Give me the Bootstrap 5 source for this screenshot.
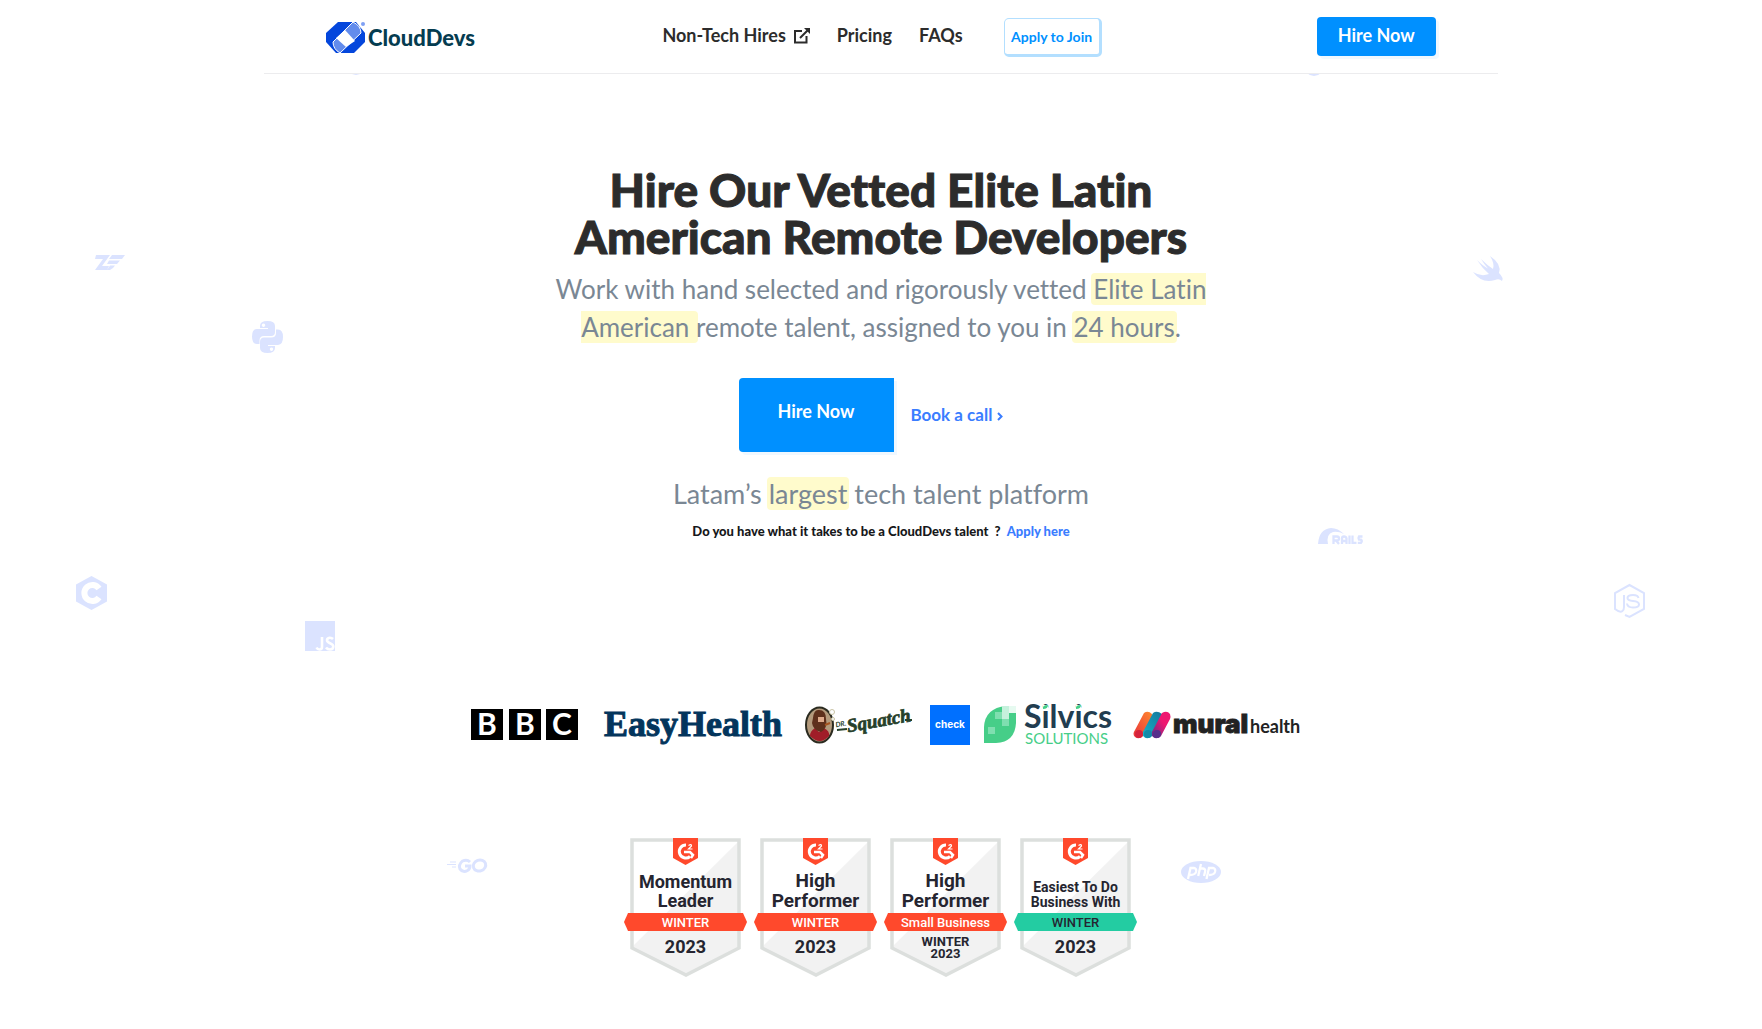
<!DOCTYPE html>
<html lang="en">
<head>
<meta charset="utf-8">
<meta name="viewport" content="width=device-width, initial-scale=1">
<title>CloudDevs</title>
<link href="https://cdn.jsdelivr.net/npm/bootstrap@5.3.0/dist/css/bootstrap.min.css" rel="stylesheet">
<style>
body{font-family:Lato,"Open Sans",sans-serif;color:#2c2c2c;background:#fff;font-variant-ligatures:none}
a{text-decoration:none}
.site-head{width:70%;padding:0 62px;height:74px;border-bottom:1px solid #ececee;background:#fff}
.brand-mark{width:152px;height:34px;margin-top:2px}
.site-nav{gap:27px;font-size:18px;font-weight:700;padding-right:31px}
.site-nav a{color:#2c2c2c;padding-bottom:2px}
.site-nav .join-btn{margin:2px 0 0 14px;width:98px;height:39px;border:1px solid #b3dfff;border-right-width:3px;border-bottom-width:3px;border-radius:5px;font-size:14px;color:#0090ff;background:#fff}
.hire-btn{background:#0090ff;color:#fff;font-weight:700;font-size:18px;border:0;border-radius:4px;box-shadow:3px 3px 0 #f0f8ff}
.hire-sm{width:119px;height:39px;padding-bottom:4px}
.hire-lg{width:155px;height:74px;border-radius:4px 0 0 4px;padding-bottom:9px}
.hero{padding-top:92px}
.hero h1{font-size:46px;line-height:47px;font-weight:900;-webkit-text-stroke:1px #2c2c2c;max-width:700px;margin:0 auto 10px}
.pitch{font-size:26px;line-height:38px;color:#7a8794;max-width:700px;margin:0 auto}
.pitch-lg{font-size:27px;margin-top:23px}
.hl{background:#fffbcc;border-radius:4px;padding:0 2px;margin:0 -2px}
.cta{gap:17px;margin-top:32px;padding-right:21px}
.call-link{color:#3a7dff;font-weight:700;font-size:17px}
.talent{font-size:13px;font-weight:900;color:#17181a;line-height:20px}
.talent a{color:#3a7dff;margin-left:3px}
.logos{margin-top:164px;padding-left:9px}
.logos svg,.awards svg,.deco svg{display:block;overflow:visible}
.awards{gap:6px;margin-top:93px}
.deco{position:absolute;inset:0;z-index:-1;overflow:hidden;color:#dbe3ff}
.deco svg{position:absolute;fill:currentColor}
.d-zend{left:5.4%;top:255px}.d-py{left:14.3%;top:321px}.d-c{left:4.3%;top:576px}.d-js{left:17.3%;top:621px}
.d-swift{left:83.6%;top:256px}.d-rails{left:74.8%;top:528px}.d-node{left:91.6%;top:584px}.d-php{left:67.02%;top:861px}.d-go{left:25.35%;top:858px}
.d-top{left:74.1%;top:56px}.d-top2{left:20%;top:55px}
.aw text{font-family:Roboto,sans-serif;font-weight:700;fill:#252530;text-anchor:middle}
.aw .f18{font-size:18px}.aw .f19{font-size:19px}.aw .f14{font-size:14px}.aw .f13{font-size:13px}
.aw .rib{font-weight:500;fill:#fff}.aw .ribd{font-weight:500}
</style>
</head>
<body class="position-relative">
<div class="deco" aria-hidden="true">
<svg class="d-top" width="20" height="20"><circle cx="8" cy="10" r="10"/></svg>
<svg class="d-top2" width="10" height="20"><circle cx="4" cy="10" r="10"/></svg>
<svg class="d-zend" width="30" height="16"><path d="M1 0H15L7 11H14L12 15H0L8 4H0zM17 0H30L27 4H14zM14 5.500H25L22 9H12zM15 10.500H20L18 13L15 15H12z"/></svg>
<svg class="d-py" width="31" height="32" viewBox="0 0 31 32"><path fill-rule="evenodd" d="M8 5Q8 0 15.500 0T23 5V11Q23 15 19 15H12Q7.500 15 7.500 19.500V23H5Q0 23 0 15.500T5 8H16V7H8zM11.500 2.500a1.700 1.700 0 1 0 .01 0z"/><path fill-rule="evenodd" d="M23 27Q23 32 15.500 32T8 27V21Q8 16.500 12 16.500H19Q24 16.500 24 12V8.500H26Q31 8.500 31 16T26 24H16V25H23zM19.500 26.500a1.700 1.700 0 1 0 .01 0z"/></svg>
<svg class="d-c" width="31" height="34" viewBox="0 0 31 34"><path d="M15.500 0L31 8.500V25.500L15.500 34L0 25.500V8.500z"/><path d="M23 12.500A8 8 0 1 0 23 21.500" fill="none" stroke="#fff" stroke-width="6"/></svg>
<svg class="d-js" width="30" height="30"><path d="M0 0H30V30H0z"/><path d="M17 16V26Q17 28.500 14.500 28.500Q12.500 28.500 11.500 26.500M28 18Q26.500 16.500 24.500 16.700Q22 17 22 19.300Q22 21 25 22.200Q28.300 23.500 28.300 25.500Q28.200 28.500 25 28.500Q22.500 28.500 21 26.500" fill="none" stroke="#fff" stroke-width="2.600"/></svg>
<svg class="d-swift" width="30" height="26" viewBox="0 0 30 26"><path d="M17 0Q29 8 26 17Q31 22 29 25Q26 22 22 24Q9 28 0 16Q8 21 16 18Q9 12 4 4Q10 10 15 12.500Q11 8 8 3Q14 9 20 13Q22 8 17 0z"/></svg>
<svg class="d-rails" width="45" height="16" viewBox="0 0 45 16"><path d="M0 16Q1 1 13 0Q20 0 26 6Q20 3 15 4Q8 6 10 16z"/><path d="M15.500 16V8.500H19Q21 8.500 21 10.500T19 12.500H16M18 12.500L21 16M24 16V10.500Q24 8.500 26 8.500T28.500 10.500V16M24 13H28M31.500 7.500V16M34.500 7.500V14.800H38.500M44.500 8.500H41Q40 10 41 11.700H43Q44.500 13 43 14.800H39.800" fill="none" stroke="currentColor" stroke-width="2.300"/></svg>
<svg class="d-node" width="31" height="34" viewBox="0 0 31 34"><path d="M11 31L15.500 33L30 25V9L15.500 1L1 9V25Q6 29 8.500 27Q10 26 10 23V11M24.500 14Q24 11 19 11Q13.500 11 13.500 14Q13.500 16.500 19 17Q25 17.500 25 20.500Q25 23.500 19 23.500Q13.500 23.500 13 19.500" fill="none" stroke="currentColor" stroke-width="2"/></svg>
<svg class="d-php" width="40" height="22" viewBox="0 0 40 22"><ellipse cx="20" cy="11" rx="20" ry="11"/><path d="M7 18L9.500 7H13Q16 7.500 15 11Q14 14 9 14M20 3L17.200 15M19 7.500H22Q25 8 24 11L23 15M25.500 18L28 7H32Q35 7.500 34 11Q33 14 28 14" fill="none" stroke="#fff" stroke-width="2.300"/></svg>
<svg class="d-go" width="41" height="15" viewBox="0 0 41 15"><path d="M3 4H9M0 6.500H9M5 9H9" stroke="currentColor" stroke-width="1"/><path d="M23 4Q20 1 15.500 3Q11 7 13 11Q16 15 20.500 12.500Q23 11 23 8H18" fill="none" stroke="currentColor" stroke-width="3"/><ellipse cx="32.500" cy="7.500" rx="6.300" ry="5.500" transform="rotate(-20 32.500 7.500)" fill="none" stroke="currentColor" stroke-width="3"/></svg>
</div>

<header class="site-head mx-auto d-flex align-items-center justify-content-between">
<a href="#" aria-label="CloudDevs home"><svg class="brand-mark d-block" viewBox="0 0 152 34"><path d="M12 1H30L39 12V21L28 32H10L0 21V12z" fill="#0446dc"/><path d="M27 1L7 21Q7 28 14 32L35 12Q35 5 27 1z" fill="#638cec"/><path d="M27 1L7 21Q7 28 14 32M14 32L35 12Q35 5 27 1" fill="none" stroke="#fff"/><path d="M19 9L29 20L20 26L10 17z" fill="#fff"/><circle cx="37" cy="3" r="4" fill="#fff"/><circle cx="37" cy="3" r="2" fill="#7fa0f4"/><text x="42" y="25" font-family="Lato" font-weight="900" font-size="22" fill="#053c50">CloudDevs</text></svg></a>
<nav class="site-nav d-flex align-items-center mx-auto">
<a href="#" class="d-flex align-items-center">Non-Tech Hires<svg class="ms-2" width="16" height="16" viewBox="0 0 16 16" fill="none" stroke="#2c2c2c" stroke-width="2"><path d="M8 3H1V14.500H12.500V8M6 10L14 2"/><path d="M10 0H16V6z" fill="#2c2c2c" stroke="none"/></svg></a>
<a href="#">Pricing</a>
<a href="#">FAQs</a>
<button type="button" class="join-btn p-0 fw-bold">Apply to Join</button>
</nav>
<button type="button" class="hire-btn hire-sm">Hire Now</button>
</header>

<main>
<section class="hero text-center">
<h1>Hire Our Vetted Elite Latin American Remote Developers</h1>
<p class="pitch">Work with hand selected and rigorously vetted <span class="hl">Elite Latin<br>American </span>remote talent, assigned to you in <span class="hl">24 hours</span>.</p>
<div class="cta d-flex justify-content-center align-items-center">
<button type="button" class="hire-btn hire-lg">Hire Now</button>
<a href="#" class="call-link">Book a call <svg width="6" height="9" viewBox="0 0 6 9" fill="none" stroke="#3a7dff" stroke-width="2"><path d="M1 1L4.500 4.500L1 8"/></svg></a>
</div>
<p class="pitch pitch-lg">Latam’s <span class="hl">largest</span> tech talent platform</p>
<p class="talent mb-0 mt-2">Do you have what it takes to be a CloudDevs talent &nbsp;? <a href="#">Apply here</a></p>
</section>

<section class="logos d-flex justify-content-center align-items-center" aria-label="Customers">
<svg width="830" height="40" viewBox="0 0 830 40">
<path d="M0 4H32V35H0zM38 4H70V35H38zM75 4H107V35H75z"/>
<g font-family="Lato" font-weight="700" font-size="30" fill="#fff" text-anchor="middle"><text x="16" y="30">B</text><text x="54" y="30">B</text><text x="91" y="30">C</text></g>
<text x="133" y="31" font-family="Liberation Serif" font-weight="700" font-size="36" fill="#03355c" stroke="#03355c">EasyHealth</text>
<g><ellipse cx="348.500" cy="20" rx="13.500" ry="17.500" fill="#b39a7c" stroke="#2b2b20" stroke-width="2"/><path d="M339 31Q339 26 344 23L348 27L353 23Q359 26 358 31Q349 41 339 31z" fill="#a01d28"/><path d="M342 13Q343 4 348 5Q355 5 355 14Q357 23 350 27Q342 25 341 18z" fill="#5e301c"/><path d="M347 12H353V17H347z" fill="#dda98a"/><path d="M354 20L359 18" stroke="#a55420" stroke-width="2"/><circle cx="361" cy="7" r="2.500" fill="#fff" stroke="#c8c3a5"/><circle cx="362" cy="14" r="1.500" fill="#fff" stroke="#c8c3a5"/>
<g font-style="italic" font-weight="700" fill="#26402a" transform="rotate(-10 367 28)"><text x="366" y="22" font-size="7" font-family="Lato">DR.</text><text x="377" y="29" font-size="19" stroke="#26402a" stroke-width=".7" font-family="Liberation Serif">Squatch</text></g><path d="M366 25L376 24M434 15L441 15" stroke="#26402a" stroke-width="2"/></g>
<path d="M459 0H499V40H459z" fill="#0070ff"/><text x="479" y="23" font-family="Inter" font-weight="700" font-size="10" fill="#fff" text-anchor="middle">check</text>
<path d="M513 38V22Q514 3 535 1H545V18Q544 37 525 38z" fill="#46ce88"/><path d="M524 7H531V14H524zM517 22H524V29H517zM531 14H538V21H531z" fill="#7fdfb0"/><path d="M531 1H545V7H538V14H531z" fill="#c5f1dc"/><path d="M538 1H545V8H538z" fill="#e6faf0"/>
<text x="553" y="23" font-family="Lato" font-weight="700" font-size="32" fill="#223d50">Silvics</text><text x="554" y="39" font-family="Lato" font-size="15" fill="#46ce88">SOLUTIONS</text><path d="M572 0H577V4H572zM605 0H610V4H605z" fill="#fff"/><path d="M572 4Q571 0 577 0Q577 4 572 4zM605 4Q604 0 610 0Q610 4 605 4z" fill="#46ce88"/>
<defs><linearGradient id="m1" x1="0" y1="1" x2="1" y2="0"><stop stop-color="#e8323c"/><stop offset="1" stop-color="#ff8a2e"/></linearGradient><linearGradient id="m2" x1="0" y1="1" x2="1" y2="0"><stop stop-color="#16b5c8"/><stop offset="1" stop-color="#15779c"/></linearGradient><linearGradient id="m3" x1="0" y1="1" x2="1" y2="0"><stop stop-color="#56308a"/><stop offset=".6" stop-color="#ee1770"/></linearGradient></defs>
<path d="M664 25L673 8Q677 5 681 9L682 13L672 31Q668 35 664 32Q661 29 664 25z" fill="url(#m1)"/><path d="M673 25L682 8Q686 5 691 9V13L681 31Q677 35 673 32Q670 29 673 25z" fill="url(#m2)"/><path d="M682 25L691 8Q696 5 699 9Q700 12 699 14L690 31Q686 35 682 32Q679 29 682 25z" fill="url(#m3)"/><circle cx="668" cy="29" r="4" fill="#d5223c"/><circle cx="677" cy="29" r="4" fill="#128ba8"/><circle cx="686" cy="29" r="4" fill="#57308b"/>
<text x="702" y="28" font-family="Inter" font-weight="900" font-size="26" fill="#222" stroke="#222" stroke-width=".8">mural</text><text x="779" y="28" font-family="Lato" font-weight="700" font-size="18" fill="#222">health</text>
</svg>
</section>

<section class="awards d-flex justify-content-center" aria-label="Awards">
<svg class="aw" width="124" height="140"><defs><g id="shield"><path d="M8 2H115V110L62 137L8 110z" fill="#fff"/><path d="M115 3V110L62 137L8 109z" fill="#f2f2f2"/><path d="M8 2H115V110L62 137L8 110z" fill="none" stroke="#dcdfdd" stroke-width="3.500"/><path d="M49 0H74V20L61.500 27L49 20z" fill="#ff492c"/><path d="M62 7A6.500 6.500 0 1 0 66 18.500" fill="none" stroke="#fff" stroke-width="3"/><path d="M60 14H66L69 17L67 20" fill="none" stroke="#fff" stroke-width="2.500"/><path d="M64.500 7.500Q67.500 5.500 67.500 8L64.500 11H68.500" fill="none" stroke="#fff" stroke-width="1.200"/></g><path id="ribbon" d="M4 75H119L123 84L119 93H4L0 84z"/></defs>
<use href="#shield"/><use href="#ribbon" fill="#ff492c"/><text class="f18" x="61.500" y="50">Momentum</text><text class="f18" x="61.500" y="69">Leader</text><text class="f13 rib" x="61.500" y="89">WINTER</text><text class="f18" x="61.500" y="115">2023</text></svg>
<svg class="aw" width="124" height="140"><use href="#shield"/><use href="#ribbon" fill="#ff492c"/><text class="f19" x="61.500" y="49">High</text><text class="f19" x="61.500" y="69">Performer</text><text class="f13 rib" x="61.500" y="89">WINTER</text><text class="f18" x="61.500" y="115">2023</text></svg>
<svg class="aw" width="124" height="140"><use href="#shield"/><use href="#ribbon" fill="#ff492c"/><text class="f19" x="61.500" y="49">High</text><text class="f19" x="61.500" y="69">Performer</text><text class="f13 rib" x="61.500" y="89">Small Business</text><text class="f13" x="61.500" y="108">WINTER</text><text class="f13" x="61.500" y="120">2023</text></svg>
<svg class="aw" width="124" height="140"><use href="#shield"/><use href="#ribbon" fill="#23cca2"/><text class="f14" x="61.500" y="54">Easiest To Do</text><text class="f14" x="61.500" y="69">Business With</text><text class="f13 ribd" x="61.500" y="89">WINTER</text><text class="f18" x="61.500" y="115">2023</text></svg>
</section>
</main>
<script src="https://cdn.jsdelivr.net/npm/bootstrap@5.3.0/dist/js/bootstrap.bundle.min.js"></script>
</body>
</html>
